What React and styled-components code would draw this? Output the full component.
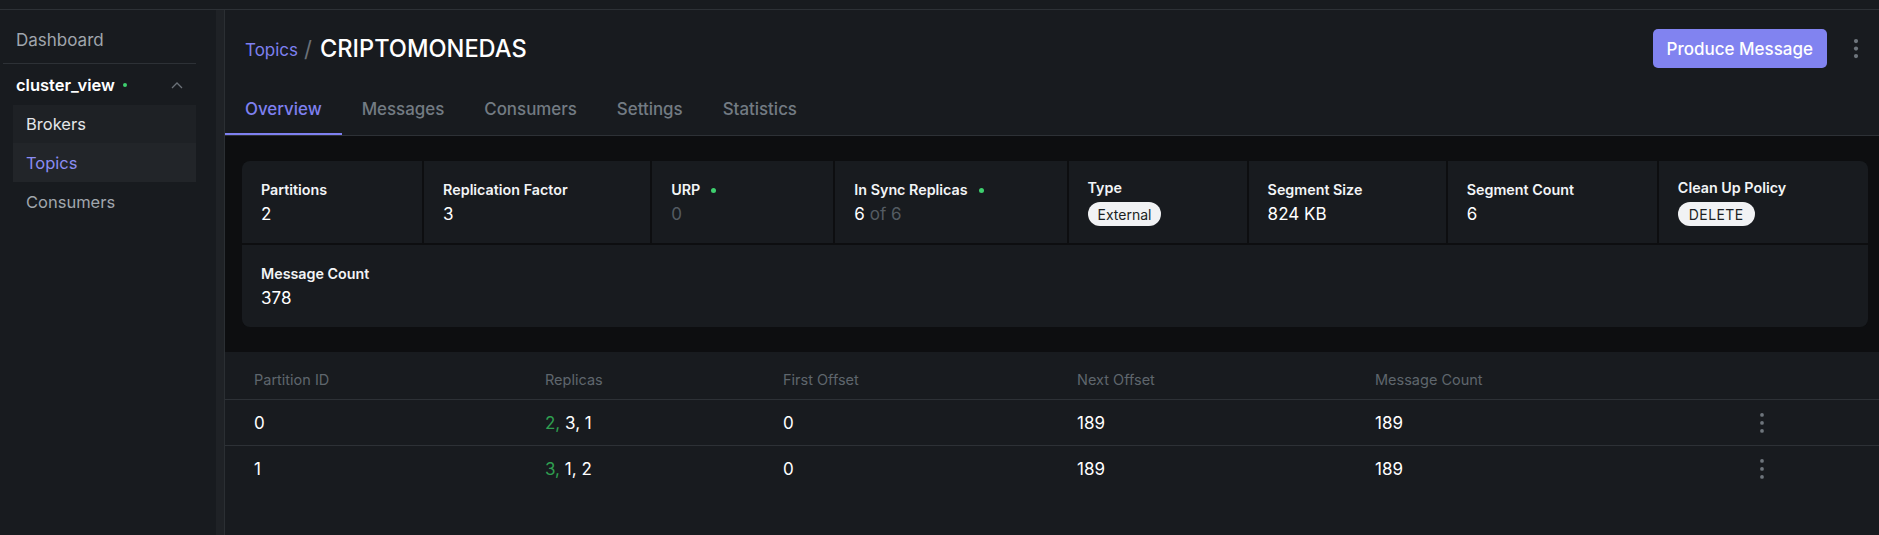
import React from "react";
import styled, { createGlobalStyle } from "styled-components";

const GlobalStyle = createGlobalStyle`
  html, body { margin: 0; padding: 0; background: #0d0e10; }
  body {
    font-family: Inter, "Noto Sans", "Liberation Sans", sans-serif;
    color: #fff;
    -webkit-font-smoothing: antialiased;
  }
  * { box-sizing: border-box; }
`;

const Page = styled.div`
  width: 1879px;
  height: 535px;
  display: flex;
  flex-direction: column;
  overflow: hidden;
  background: #181b1f;
`;

const TopStrip = styled.div`
  height: 10px;
  flex: none;
  background: #181b1f;
  border-bottom: 1px solid #2d3136;
`;

const Body = styled.div`
  flex: 1;
  display: flex;
  min-height: 0;
`;

const Sidebar = styled.aside`
  width: 216px;
  flex: none;
  background: #181b1f;
  padding: 12px 20px 0 3px;
`;

const ScrollTrack = styled.div`
  width: 9px;
  flex: none;
  background: #1f2226;
  border-right: 1px solid #2b2f33;
`;

const NavLink = styled.div`
  height: 36px;
  display: flex;
  align-items: center;
  padding-left: 13px;
  font-size: 17px;
  color: #a0a6ad;
`;

const Divider = styled.div`
  margin-top: 5px;
  height: 1px;
  background: #2d3136;
`;

const ClusterRow = styled.div`
  height: 41px;
  display: flex;
  align-items: center;
  justify-content: space-between;
  padding: 0 13px 0 13px;
`;

const ClusterName = styled.span`
  display: flex;
  align-items: center;
  font-size: 16.5px;
  font-weight: 600;
  color: #fff;
  gap: 8px;
`;

const Dot = styled.span`
  width: ${(p) => p.$size || 4}px;
  height: ${(p) => p.$size || 4}px;
  border-radius: 50%;
  background: #3ecf6e;
  flex: none;
  margin-left: ${(p) => p.$gap || 0}px;
`;

const SubList = styled.div`
  margin-left: 10px;
  display: flex;
  flex-direction: column;
`;

const SubItem = styled.div`
  height: ${(p) => (p.$tall ? 39 : 38)}px;
  display: flex;
  align-items: center;
  padding-left: 13px;
  font-size: 16.5px;
  background: ${(p) =>
    p.$variant === "active" ? "#222529" : p.$variant === "open" ? "#1e2125" : "transparent"};
  color: ${(p) =>
    p.$variant === "active" ? "#8a8cf3" : p.$variant === "open" ? "#e4e6e9" : "#a0a6ad"};
`;

const Main = styled.main`
  flex: 1;
  display: flex;
  flex-direction: column;
  background: #181b1f;
  min-width: 0;
`;

const Header = styled.header`
  padding-top: 19px;
  border-bottom: 1px solid #2d3136;
`;

const TitleRow = styled.div`
  height: 39px;
  display: flex;
  align-items: center;
  justify-content: space-between;
  padding: 0 11px 0 20px;
`;

const Breadcrumb = styled.div`
  display: flex;
  align-items: center;
`;

const CrumbLink = styled.span`
  font-size: 17px;
  color: #7e80f0;
  margin-top: 3px;
`;

const CrumbSep = styled.span`
  font-size: 22px;
  color: #6b7178;
  margin: 0 8px 0 6px;
`;

const CrumbTitle = styled.h1`
  margin: 0;
  font-size: 23.6px;
  font-weight: 500;
  color: #fff;
`;

const Actions = styled.div`
  display: flex;
  align-items: center;
  gap: 17px;
`;

const PrimaryButton = styled.button`
  height: 39px;
  padding: 0 14px;
  border: none;
  border-radius: 5px;
  background: #8183f0;
  color: #fff;
  font-family: inherit;
  font-size: 17px;
  font-weight: 500;
`;

const IconButton = styled.span`
  width: 24px;
  height: 24px;
  display: flex;
  align-items: center;
  justify-content: center;
`;

const Tabs = styled.nav`
  display: flex;
  margin-top: 17px;
`;

const Tab = styled.div`
  height: 50px;
  padding: 0 20px;
  display: flex;
  align-items: center;
  font-size: 16.9px;
  font-weight: 500;
  color: ${(p) => (p.$active ? "#7e80f0" : "#737b83")};
  border-bottom: 2px solid ${(p) => (p.$active ? "#7e80f0" : "transparent")};
`;

const Content = styled.section`
  background: #0d0e10;
  padding: 25px 11px 25px 17px;
`;

const MetricsCard = styled.div`
  display: grid;
  grid-template-columns: 180fr 226fr 181fr 231fr 178fr 197fr 209fr 209fr;
  gap: 2px;
  background: #0d0e10;
  border-radius: 8px;
  overflow: hidden;
`;

const Cell = styled.div`
  height: 82px;
  background: #181b1f;
  padding: 0 19px;
  display: flex;
  flex-direction: column;
  justify-content: center;
  align-items: flex-start;
  grid-column: ${(p) => (p.$full ? "1 / -1" : "auto")};
`;

const Label = styled.div`
  display: flex;
  align-items: center;
  font-size: 14.3px;
  font-weight: 600;
  line-height: 20px;
  color: #f2f4f6;
`;

const Value = styled.div`
  margin-top: 4px;
  font-size: 17px;
  line-height: 20px;
  color: #fff;
`;

const Muted = styled.span`
  color: #545b62;
`;

const Pill = styled.span`
  margin-top: 4px;
  height: 24px;
  display: inline-flex;
  align-items: center;
  padding: 0 ${(p) => (p.$caps ? 11 : 10)}px;
  border-radius: 12px;
  background: #f1f2f4;
  color: #1b1e22;
  font-size: 14px;
  letter-spacing: ${(p) => (p.$caps ? "0.4px" : "0")};
  text-transform: ${(p) => (p.$caps ? "uppercase" : "none")};
`;

const Table = styled.div`
  flex: 1;
  background: #181b1f;
`;

const columns = "291px 238px 294px 298px 375px 24px 1fr";

const HeadRow = styled.div`
  display: grid;
  grid-template-columns: ${columns};
  padding: 18px 0 9px 29px;
  border-bottom: 1px solid #2d3136;
`;

const HeadCell = styled.div`
  font-size: 14.5px;
  line-height: 20px;
  color: #5f666d;
`;

const Row = styled.div`
  display: grid;
  grid-template-columns: ${columns};
  align-items: center;
  height: ${(p) => (p.$last ? 45 : 46)}px;
  padding-left: 29px;
  border-bottom: ${(p) => (p.$last ? "none" : "1px solid #2d3136")};
`;

const BodyCell = styled.div`
  font-size: 17px;
  color: #fff;
`;

const Leader = styled.span`
  color: #2f9f50;
`;

const Kebab = ({ gap = 7.5, r = 2, color = "#6e757c" }) => (
  <svg width="8" height={gap * 2 + r * 2 + 2} viewBox={`0 0 8 ${gap * 2 + r * 2 + 2}`}>
    {[0, 1, 2].map((i) => (
      <circle key={i} cx="4" cy={r + 1 + i * gap} r={r} fill={color} />
    ))}
  </svg>
);

const Chevron = () => (
  <svg width="12" height="8" viewBox="0 0 12 8">
    <polyline points="1,7 6,2 11,7" fill="none" stroke="#6b7178" strokeWidth="1.3" />
  </svg>
);

const metrics = [
  { label: "Partitions", value: "2" },
  { label: "Replication Factor", value: "3" },
  { label: "URP", dot: true, value: <Muted>0</Muted> },
  {
    label: "In Sync Replicas",
    dot: true,
    value: (
      <>
        6 <Muted>of 6</Muted>
      </>
    ),
  },
  { label: "Type", pill: "External" },
  { label: "Segment Size", value: "824 KB" },
  { label: "Segment Count", value: "6" },
  { label: "Clean Up Policy", pill: "DELETE", caps: true },
];

const partitions = [
  { id: "0", leader: "2,", rest: " 3, 1", first: "0", next: "189", count: "189" },
  { id: "1", leader: "3,", rest: " 1, 2", first: "0", next: "189", count: "189" },
];

const tabs = ["Overview", "Messages", "Consumers", "Settings", "Statistics"];

export default function App() {
  return (
    <>
      <GlobalStyle />
      <Page>
        <TopStrip />
        <Body>
          <Sidebar>
            <NavLink>Dashboard</NavLink>
            <Divider />
            <ClusterRow>
              <ClusterName>
                cluster_view
                <Dot />
              </ClusterName>
              <Chevron />
            </ClusterRow>
            <SubList>
              <SubItem $variant="open">Brokers</SubItem>
              <SubItem $variant="active" $tall>
                Topics
              </SubItem>
              <SubItem $tall>Consumers</SubItem>
            </SubList>
          </Sidebar>
          <ScrollTrack />
          <Main>
            <Header>
              <TitleRow>
                <Breadcrumb>
                  <CrumbLink>Topics</CrumbLink>
                  <CrumbSep>/</CrumbSep>
                  <CrumbTitle>CRIPTOMONEDAS</CrumbTitle>
                </Breadcrumb>
                <Actions>
                  <PrimaryButton>Produce Message</PrimaryButton>
                  <IconButton>
                    <Kebab gap={7.5} r={2.1} />
                  </IconButton>
                </Actions>
              </TitleRow>
              <Tabs>
                {tabs.map((t, i) => (
                  <Tab key={t} $active={i === 0}>
                    {t}
                  </Tab>
                ))}
              </Tabs>
            </Header>
            <Content>
              <MetricsCard>
                {metrics.map((m) => (
                  <Cell key={m.label}>
                    <Label>
                      {m.label}
                      {m.dot && <Dot $gap={11} $size={5} />}
                    </Label>
                    {m.pill ? <Pill $caps={m.caps}>{m.pill}</Pill> : <Value>{m.value}</Value>}
                  </Cell>
                ))}
                <Cell $full>
                  <Label>Message Count</Label>
                  <Value>378</Value>
                </Cell>
              </MetricsCard>
            </Content>
            <Table>
              <HeadRow>
                <HeadCell>Partition ID</HeadCell>
                <HeadCell>Replicas</HeadCell>
                <HeadCell>First Offset</HeadCell>
                <HeadCell>Next Offset</HeadCell>
                <HeadCell>Message Count</HeadCell>
              </HeadRow>
              {partitions.map((p, i) => (
                <Row key={p.id} $last={i === partitions.length - 1}>
                  <BodyCell>{p.id}</BodyCell>
                  <BodyCell>
                    <Leader>{p.leader}</Leader>
                    {p.rest}
                  </BodyCell>
                  <BodyCell>{p.first}</BodyCell>
                  <BodyCell>{p.next}</BodyCell>
                  <BodyCell>{p.count}</BodyCell>
                  <IconButton>
                    <Kebab gap={8} r={1.9} />
                  </IconButton>
                </Row>
              ))}
            </Table>
          </Main>
        </Body>
      </Page>
    </>
  );
}
